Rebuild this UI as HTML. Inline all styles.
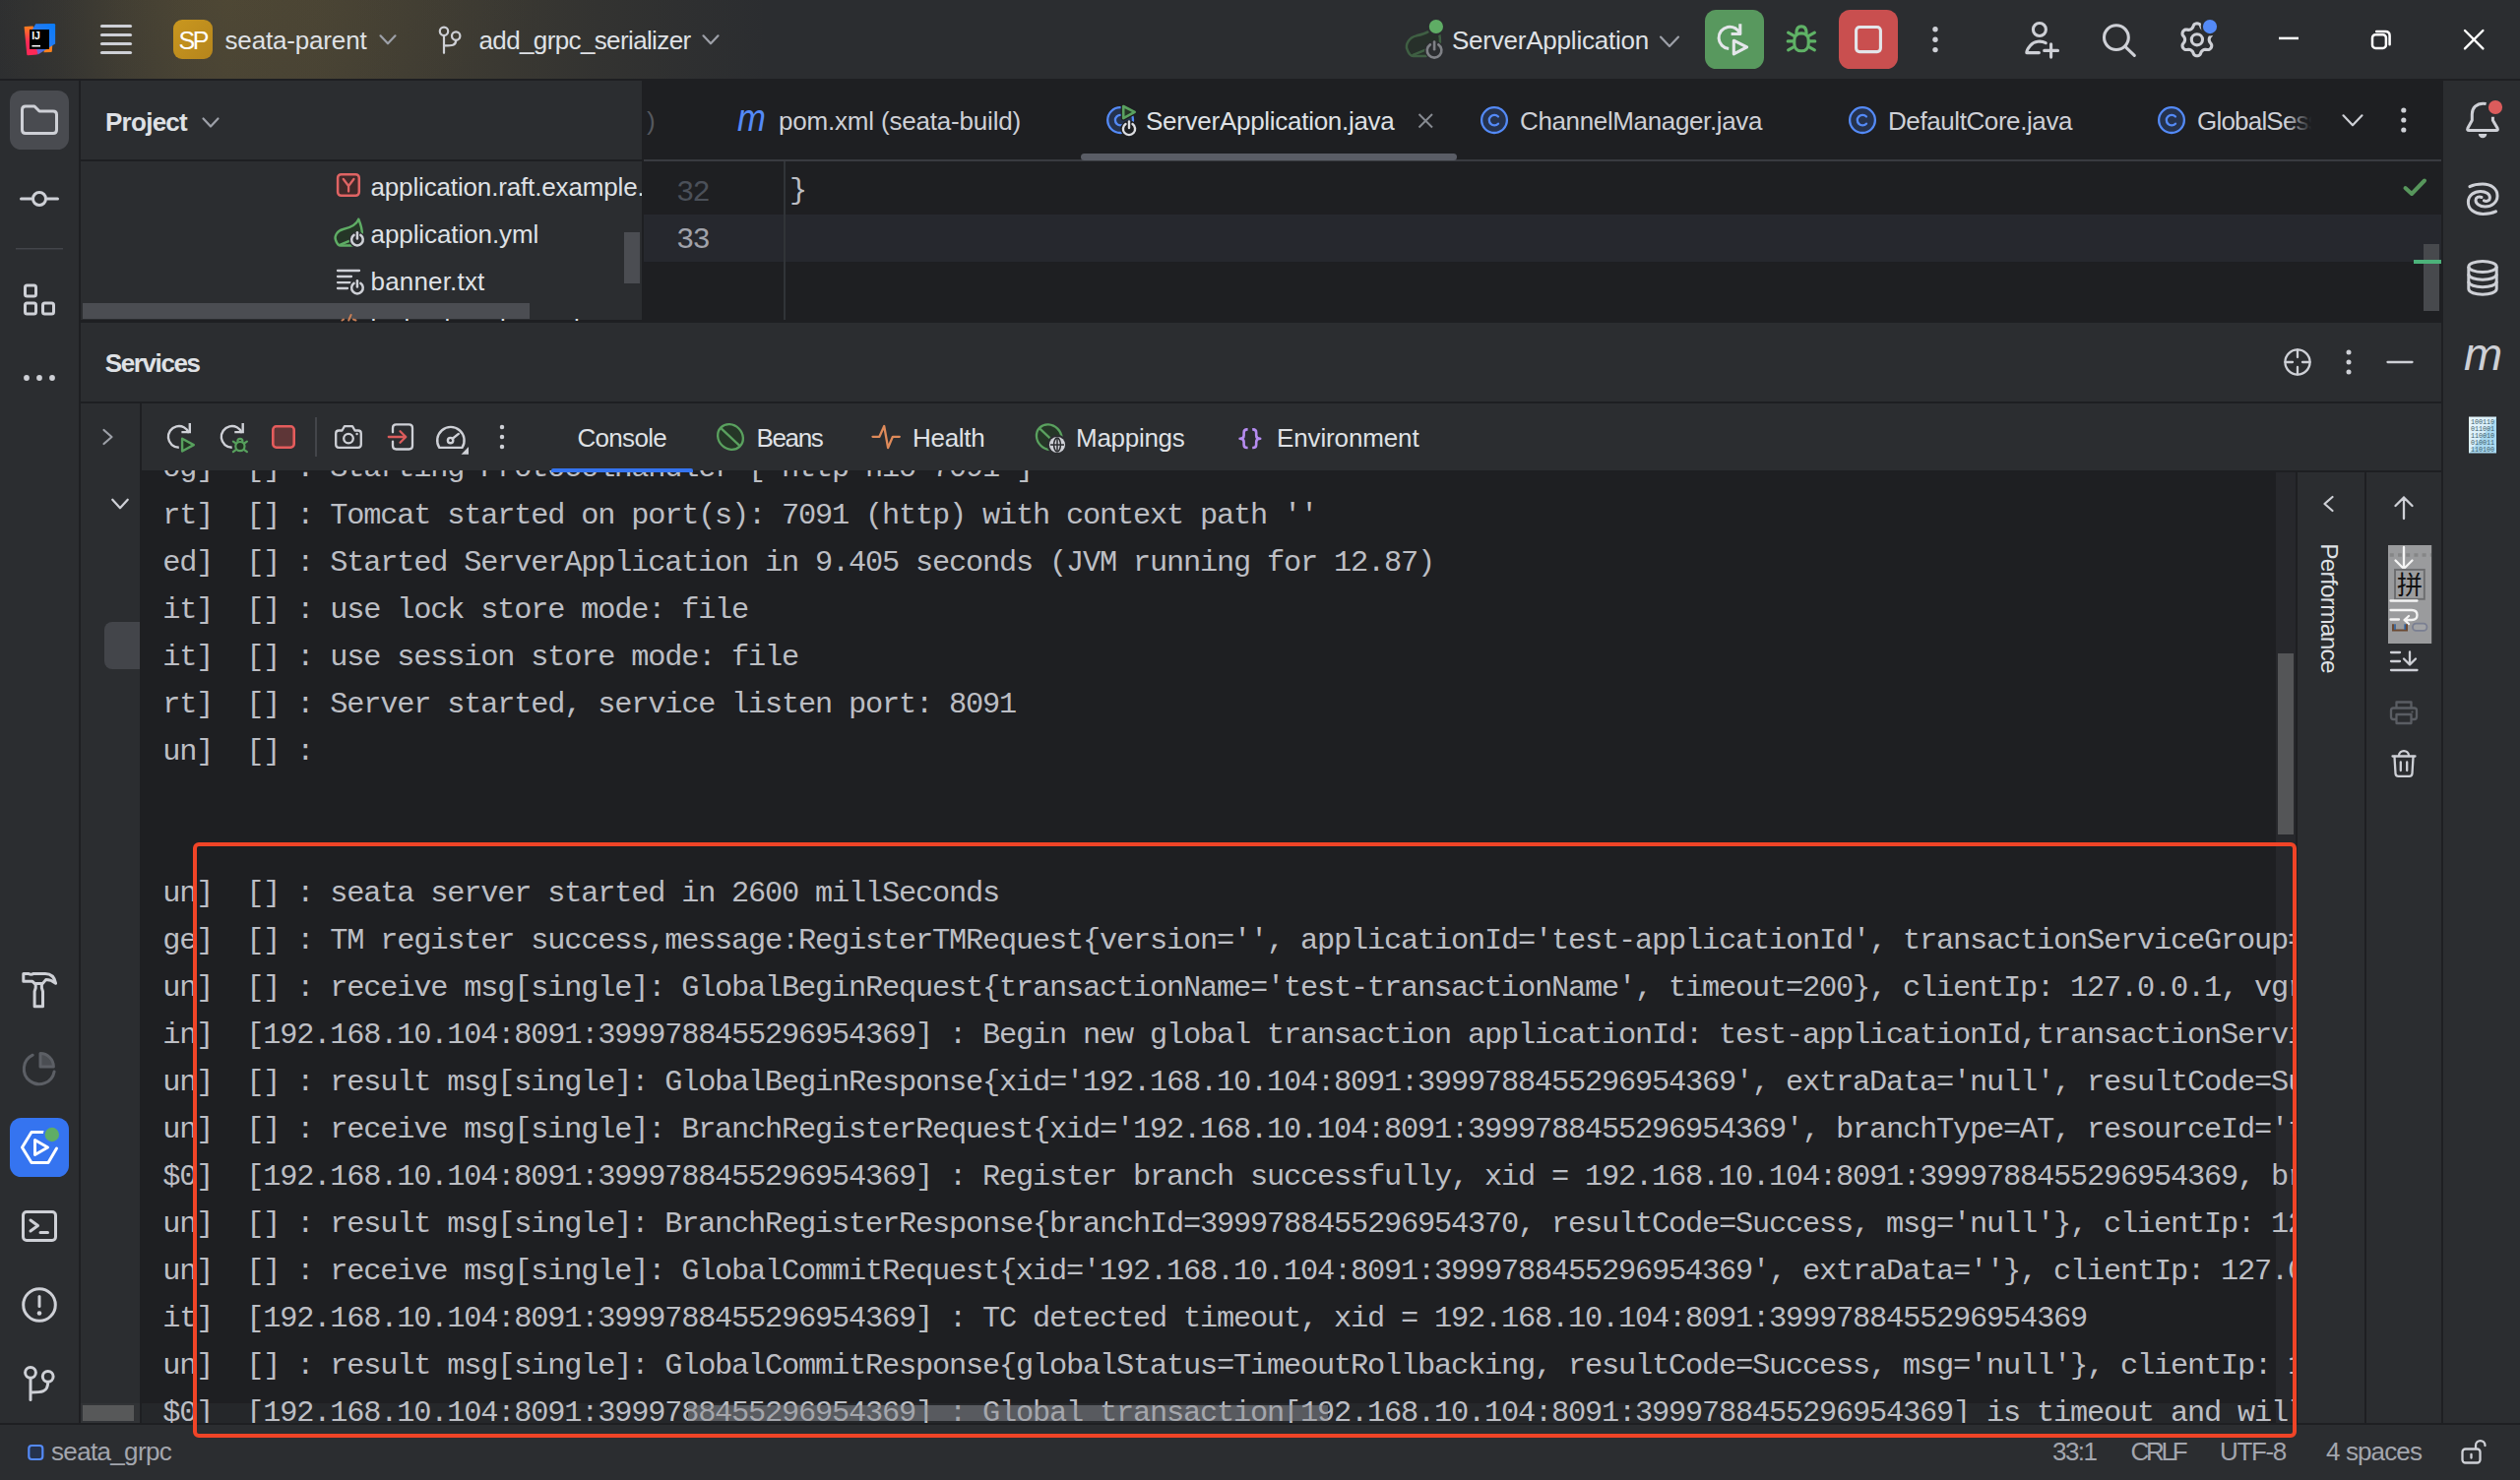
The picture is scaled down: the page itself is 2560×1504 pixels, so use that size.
<!DOCTYPE html>
<html lang="en"><head><meta charset="utf-8"><title>seata-parent – ServerApplication.java</title>
<style>
html,body{margin:0;padding:0;background:#2b2d30;}
body{width:2560px;height:1504px;overflow:hidden;font-family:"Liberation Sans","Noto Sans CJK SC",sans-serif;}
#root{position:relative;width:2560px;height:1504px;overflow:hidden;background:#2b2d30;}
.b{position:absolute;display:block;}
.t{position:absolute;white-space:pre;line-height:40px;height:40px;}
.m{position:absolute;white-space:pre;font-family:"Liberation Mono","DejaVu Sans Mono",monospace;font-size:30.3px;letter-spacing:-1.183px;line-height:48px;height:48px;color:#bcbec4;}
.clip{position:absolute;overflow:hidden;}

</style></head>
<body>
<div id="root">
<div class="b" style="left:0;top:0;width:2560px;height:80px;background:radial-gradient(ellipse 330px 110px at 230px 0px, rgba(150,125,62,0.05), rgba(150,125,62,0) 100%), linear-gradient(90deg, rgba(150,125,62,0.02) 0px, rgba(150,125,62,0.08) 60px, rgba(150,125,62,0.18) 120px, rgba(150,125,62,0.26) 180px, rgba(150,125,62,0.29) 230px, rgba(150,125,62,0.27) 320px, rgba(150,125,62,0.22) 400px, rgba(150,125,62,0.15) 500px, rgba(150,125,62,0.08) 600px, rgba(150,125,62,0.03) 700px, rgba(150,125,62,0) 780px), #2b2d30;"></div>
<div class="b" style="left:0px;top:80px;width:2560px;height:2px;background:#1e1f22;"></div>
<div class="b" style="left:0px;top:82px;width:80px;height:1364px;background:#2b2d30;"></div>
<div class="b" style="left:80px;top:82px;width:2px;height:1364px;background:#1e1f22;"></div>
<div class="b" style="left:2480px;top:82px;width:2px;height:1364px;background:#1e1f22;"></div>
<div class="b" style="left:2482px;top:82px;width:78px;height:1364px;background:#2b2d30;"></div>
<div class="b" style="left:82px;top:82px;width:570px;height:243px;background:#2b2d30;"></div>
<div class="b" style="left:82px;top:162px;width:570px;height:2px;background:#1e1f22;"></div>
<div class="b" style="left:652px;top:82px;width:1828px;height:243px;background:#1e1f22;"></div>
<div class="b" style="left:654px;top:162px;width:1826px;height:2px;background:#393b40;"></div>
<div class="b" style="left:654px;top:218px;width:1826px;height:48px;background:#26282e;"></div>
<div class="b" style="left:796px;top:164px;width:2px;height:161px;background:#313438;"></div>
<div class="b" style="left:82px;top:325px;width:2398px;height:3px;background:#1e1f22;"></div>
<div class="b" style="left:82px;top:328px;width:2398px;height:1118px;background:#2b2d30;"></div>
<div class="b" style="left:82px;top:408px;width:2398px;height:2px;background:#1e1f22;"></div>
<div class="b" style="left:142px;top:410px;width:2px;height:1036px;background:#1e1f22;"></div>
<div class="b" style="left:144px;top:478px;width:2188px;height:968px;background:#1e1f22;"></div>
<div class="b" style="left:2332px;top:478px;width:2px;height:968px;background:#1e1f22;"></div>
<div class="b" style="left:2402px;top:478px;width:2px;height:968px;background:#1e1f22;"></div>
<div class="b" style="left:0px;top:1448px;width:2560px;height:56px;background:#2b2d30;"></div>
<div class="b" style="left:0px;top:1446px;width:2560px;height:2px;background:#1e1f22;"></div>
<span class="t" style="left:228.5px;top:20.5px;font-size:26px;color:#dfe1e5;letter-spacing:-0.164px;">seata-parent</span>
<span class="t" style="left:486.5px;top:20.5px;font-size:26px;color:#dfe1e5;letter-spacing:-0.626px;">add_grpc_serializer</span>
<span class="t" style="left:1475px;top:20.5px;font-size:26px;color:#dfe1e5;letter-spacing:-0.221px;">ServerApplication</span>
<div class="b" style="left:176px;top:20px;width:40px;height:40px;border-radius:9px;background:linear-gradient(135deg,#c9971f,#b5851c);"></div>
<span class="t" style="left:181.5px;top:20.8px;font-size:25px;color:#ffffff;letter-spacing:-2.426px;">SP</span>
<span class="t" style="left:107px;top:103.5px;font-size:26px;font-weight:bold;color:#dfe1e5;letter-spacing:-0.734px;">Project</span>
<div class="clip" style="left:82px;top:164px;width:570px;height:162px;">
<div class="b" style="left:2px;top:144px;width:454px;height:16px;background:#4b4d52;"></div>
<div class="b" style="left:552px;top:72px;width:16px;height:52px;background:#4b4d52;"></div>
<span class="t" style="left:294.5px;top:5.5px;font-size:26px;color:#dfe1e5;letter-spacing:-0.151px;">application.raft.example.yml</span>
<span class="t" style="left:294.5px;top:53.5px;font-size:26px;color:#dfe1e5;letter-spacing:-0.084px;">application.yml</span>
<span class="t" style="left:294.5px;top:101.5px;font-size:26px;color:#dfe1e5;letter-spacing:0.182px;">banner.txt</span>
<span class="t" style="left:294.5px;top:150.0px;font-size:26px;color:#dfe1e5;letter-spacing:-0.263px;">logback-spring.xml</span>
</div>
<span class="t" style="left:657px;top:102.5px;font-size:26px;color:#55585e;letter-spacing:-0.657px;">)</span>
<span class="t" style="left:791px;top:102.5px;font-size:26px;color:#ced0d6;letter-spacing:-0.188px;">pom.xml (seata-build)</span>
<span class="t" style="left:1164px;top:102.5px;font-size:26px;color:#dfe1e5;letter-spacing:-0.281px;">ServerApplication.java</span>
<span class="t" style="left:1544px;top:102.5px;font-size:26px;color:#ced0d6;letter-spacing:-0.365px;">ChannelManager.java</span>
<span class="t" style="left:1918px;top:102.5px;font-size:26px;color:#ced0d6;letter-spacing:-0.415px;">DefaultCore.java</span>
<div class="clip" style="left:2232px;top:100px;width:120px;height:44px;">
<span class="t" style="left:0;top:2.5px;font-size:26px;color:#ced0d6;letter-spacing:-0.8px;">GlobalSession.java</span>
<div class="b" style="left:90px;top:0;width:30px;height:44px;background:linear-gradient(90deg,rgba(30,31,34,0),#1e1f22 88%);"></div>
</div>
<span class="t" style="left:106.7px;top:349.3px;font-size:26px;font-weight:bold;color:#dfe1e5;letter-spacing:-1.372px;">Services</span>
<span class="t" style="left:586.5px;top:425.0px;font-size:26px;color:#dfe1e5;letter-spacing:-0.698px;">Console</span>
<span class="t" style="left:768.5px;top:425.0px;font-size:26px;color:#dfe1e5;letter-spacing:-1.344px;">Beans</span>
<span class="t" style="left:927px;top:425.0px;font-size:26px;color:#dfe1e5;letter-spacing:-0.275px;">Health</span>
<span class="t" style="left:1093px;top:425.0px;font-size:26px;color:#dfe1e5;letter-spacing:-0.278px;">Mappings</span>
<span class="t" style="left:1297px;top:425.0px;font-size:26px;color:#dfe1e5;letter-spacing:-0.132px;">Environment</span>
<span class="t" style="left:52px;top:1454.7px;font-size:26px;color:#a3a6ae;letter-spacing:-0.663px;">seata_grpc</span>
<span class="t" style="left:2085px;top:1454.7px;font-size:26px;color:#a3a6ae;letter-spacing:-1.525px;">33:1</span>
<span class="t" style="left:2164.5px;top:1454.7px;font-size:26px;color:#a3a6ae;letter-spacing:-3.223px;">CRLF</span>
<span class="t" style="left:2255px;top:1454.7px;font-size:26px;color:#a3a6ae;letter-spacing:-1.331px;">UTF-8</span>
<span class="t" style="left:2363px;top:1454.7px;font-size:26px;color:#a3a6ae;letter-spacing:-0.882px;">4 spaces</span>
<span class="m" style="left:687px;top:172.2px;color:#4b5059;letter-spacing:-1.6px;">32</span>
<span class="m" style="left:687px;top:219.6px;color:#a1a3ab;letter-spacing:-1.6px;">33</span>
<span class="m" style="left:802px;top:170.4px;color:#bcbec4;">}</span>
<div class="clip" style="left:144px;top:478px;width:2188px;height:968px;">
<div class="b" style="left:2168px;top:2px;width:20px;height:966px;background:#27282c;"></div>
<div class="b" style="left:0;top:948px;width:2160px;height:20px;background:#25272a;"></div>
<span class="m" style="left:21.19999999999999px;top:-26.1px;">og]  [] : Starting ProtocolHandler [&quot;http-nio-7091&quot;]</span>
<span class="m" style="left:21.19999999999999px;top:21.9px;">rt]  [] : Tomcat started on port(s): 7091 (http) with context path &#x27;&#x27;</span>
<span class="m" style="left:21.19999999999999px;top:69.9px;">ed]  [] : Started ServerApplication in 9.405 seconds (JVM running for 12.87)</span>
<span class="m" style="left:21.19999999999999px;top:117.9px;">it]  [] : use lock store mode: file</span>
<span class="m" style="left:21.19999999999999px;top:165.9px;">it]  [] : use session store mode: file</span>
<span class="m" style="left:21.19999999999999px;top:213.9px;">rt]  [] : Server started, service listen port: 8091</span>
<span class="m" style="left:21.19999999999999px;top:261.9px;">un]  [] : </span>
<span class="m" style="left:21.19999999999999px;top:405.9px;">un]  [] : seata server started in 2600 millSeconds</span>
<span class="m" style="left:21.19999999999999px;top:453.9px;">ge]  [] : TM register success,message:RegisterTMRequest{version=&#x27;&#x27;, applicationId=&#x27;test-applicationId&#x27;, transactionServiceGroup=&#x27;default_tx_group&#x27;}</span>
<span class="m" style="left:21.19999999999999px;top:501.9px;">un]  [] : receive msg[single]: GlobalBeginRequest{transactionName=&#x27;test-transactionName&#x27;, timeout=200}, clientIp: 127.0.0.1, vgroup: default_tx_group</span>
<span class="m" style="left:21.19999999999999px;top:549.9px;">in]  [192.168.10.104:8091:3999788455296954369] : Begin new global transaction applicationId: test-applicationId,transactionServiceGroup: default_tx_group</span>
<span class="m" style="left:21.19999999999999px;top:597.9px;">un]  [] : result msg[single]: GlobalBeginResponse{xid=&#x27;192.168.10.104:8091:3999788455296954369&#x27;, extraData=&#x27;null&#x27;, resultCode=Success, msg=&#x27;null&#x27;}</span>
<span class="m" style="left:21.19999999999999px;top:645.9px;">un]  [] : receive msg[single]: BranchRegisterRequest{xid=&#x27;192.168.10.104:8091:3999788455296954369&#x27;, branchType=AT, resourceId=&#x27;test-resourceId&#x27;}</span>
<span class="m" style="left:21.19999999999999px;top:693.9px;">$0]  [192.168.10.104:8091:3999788455296954369] : Register branch successfully, xid = 192.168.10.104:8091:3999788455296954369, branchId = 3999788455296954370</span>
<span class="m" style="left:21.19999999999999px;top:741.9px;">un]  [] : result msg[single]: BranchRegisterResponse{branchId=3999788455296954370, resultCode=Success, msg=&#x27;null&#x27;}, clientIp: 127.0.0.1, vgroup: default_tx_group</span>
<span class="m" style="left:21.19999999999999px;top:789.9px;">un]  [] : receive msg[single]: GlobalCommitRequest{xid=&#x27;192.168.10.104:8091:3999788455296954369&#x27;, extraData=&#x27;&#x27;}, clientIp: 127.0.0.1, vgroup: default_tx_group</span>
<span class="m" style="left:21.19999999999999px;top:837.9px;">it]  [192.168.10.104:8091:3999788455296954369] : TC detected timeout, xid = 192.168.10.104:8091:3999788455296954369</span>
<span class="m" style="left:21.19999999999999px;top:885.9px;">un]  [] : result msg[single]: GlobalCommitResponse{globalStatus=TimeoutRollbacking, resultCode=Success, msg=&#x27;null&#x27;}, clientIp: 127.0.0.1, vgroup: default_tx_group</span>
<span class="m" style="left:21.19999999999999px;top:933.9px;">$0]  [192.168.10.104:8091:3999788455296954369] : Global transaction[192.168.10.104:8091:3999788455296954369] is timeout and will rollback</span>
</div>
<span class="t" style="left:2366.3px;top:617.8px;width:0;height:0;line-height:0;font-size:24.5px;color:#dfe1e5;"><span style="position:absolute;left:0;top:0;transform:translate(-50%,-50%) rotate(90deg);white-space:pre;line-height:30px;letter-spacing:-0.795px;">Performance</span></span>
<div class="b" style="left:2462px;top:248px;width:16px;height:68px;background:#47494d;"></div>
<div class="b" style="left:2452px;top:264px;width:28px;height:4px;background:#4cb27a;"></div>
<div class="b" style="left:106px;top:632px;width:36px;height:48px;background:#43454a;border-radius:8px 0 0 8px;"></div>
<div class="b" style="left:82px;top:1426px;width:60px;height:20px;background:rgba(255,255,255,0.03);"></div>
<div class="b" style="left:84px;top:1428px;width:52px;height:16px;background:#575859;"></div>
<div class="b" style="left:2314px;top:664px;width:16px;height:184px;background:#545557;"></div>
<div class="b" style="left:699px;top:1428px;width:650px;height:16px;background:rgba(140,142,148,0.5);"></div>
<div class="b" style="left:560px;top:476px;width:144px;height:4px;background:#3574f0;border-radius:2px 2px 0 0;"></div>
<div class="b" style="left:1098px;top:156px;width:382px;height:7px;background:#5a5d66;border-radius:4px;"></div>
<span class="t" style="left:2503px;top:330px;font-size:47px;font-style:italic;color:#ced0d6;line-height:60px;height:60px;letter-spacing:-1px;">m</span>
<span class="t" style="left:748.5px;top:89.5px;font-size:38.5px;font-style:italic;color:#548af7;line-height:60px;height:60px;transform:scaleX(0.9);transform-origin:0 50%;">m</span>
<div class="b" style="left:2312px;top:478px;width:168px;height:2px;background:#1e1f22;"></div>
<div class="b" style="left:196px;top:856px;width:2137px;height:605px;box-sizing:border-box;border:4px solid #f04427;border-radius:6px;"></div>
<svg class="b" style="left:0;top:0;" width="2560" height="1504" viewBox="0 0 2560 1504" fill="none"><defs><linearGradient id="ijg" x1="0" y1="0" x2="0" y2="1"><stop offset="0" stop-color="#fc801d"/><stop offset="0.55" stop-color="#fe2857"/><stop offset="1" stop-color="#fe2857"/></linearGradient><linearGradient id="ijb" x1="1" y1="0" x2="0" y2="1"><stop offset="0" stop-color="#087cfa"/><stop offset="0.6" stop-color="#2b7bf0"/><stop offset="1" stop-color="#a050b0"/></linearGradient></defs><path d="M24.6 27.6 Q24.4 27 25.2 26.9 L33.5 26.6 L42 49.5 L37.6 55.6 L28.3 56.2 Q27.4 56.2 27.3 55.3 Z" fill="url(#ijg)"/><path d="M45 47.5 L53.3 45.5 L52.8 52.2 Q52.7 53 51.9 53 L44.5 53.2 Z" fill="#fc801d"/><path d="M36.3 24.2 L54.8 24 Q56 24 56.1 25.2 L56.1 44.4 L38.5 55.5 L32.5 30.5 Z" fill="url(#ijb)"/><rect x="30" y="30" width="20" height="20" fill="#000"/><text x="32.2" y="39.8" font-family="Liberation Sans, sans-serif" font-weight="bold" font-size="10.5" fill="#fff" letter-spacing="-0.2">IJ</text><rect x="32.4" y="46" width="8.6" height="1.5" fill="#fff"/><line x1="103.5" y1="26.5" x2="132.5" y2="26.5" stroke="#ced0d6" stroke-width="3.2" stroke-linecap="round"/><line x1="103.5" y1="35.5" x2="132.5" y2="35.5" stroke="#ced0d6" stroke-width="3.2" stroke-linecap="round"/><line x1="103.5" y1="44.5" x2="132.5" y2="44.5" stroke="#ced0d6" stroke-width="3.2" stroke-linecap="round"/><line x1="103.5" y1="53.5" x2="132.5" y2="53.5" stroke="#ced0d6" stroke-width="3.2" stroke-linecap="round"/><polyline points="386.5,36.3 394,44.3 401.5,36.3" stroke="#9da0a8" stroke-width="2.2" stroke-linecap="round" stroke-linejoin="round"/><polyline points="714.5,36.3 722,44.3 729.5,36.3" stroke="#9da0a8" stroke-width="2.2" stroke-linecap="round" stroke-linejoin="round"/><polyline points="1687.0,37.55 1696,47.05 1705.0,37.55" stroke="#9da0a8" stroke-width="2.2" stroke-linecap="round" stroke-linejoin="round"/><g stroke="#ced0d6" stroke-width="2.2" stroke-linecap="round"><circle cx="451" cy="31.8" r="4.2"/><circle cx="463.2" cy="36.6" r="4.2"/><path d="M451 36 V53.8"/><path d="M463.2 40.9 C463.2 46.4 459 46.4 451.6 46.4"/></g><g transform="translate(1428.2 22.6) scale(1.25)"><path d="M24.3 0.7 C22 7 16 9.5 8.5 11 C2 12.5 -0.5 18.5 1 22 C2 25 4 27.5 6 27.5 H16 C22 27.5 26 24 27.8 16 C28 11 26.5 6 24.3 0.7 Z" stroke="#3f5f43" stroke-width="2.00" fill="#27302a" stroke-linejoin="round"/><path d="M5.8 26.6 L16 22.4" stroke="#3f5f43" stroke-width="2.00" stroke-linecap="round" fill="none"/></g><circle cx="1457.1" cy="51.3" r="9.9" fill="#2b2d30"/><path d="M1461.29 45.32 A7.3 7.3 0 1 1 1452.91 45.32" stroke="#7f8186" stroke-width="2.6" stroke-linecap="round"/><line x1="1457.1" y1="42.5" x2="1457.1" y2="50.3" stroke="#7f8186" stroke-width="2.6" stroke-linecap="round"/><circle cx="1458.9" cy="27" r="9.2" fill="#2b2d30"/><circle cx="1458.9" cy="27" r="7.1" fill="#5fad65"/><rect x="1732" y="10" width="60" height="60" rx="11.4" fill="#58985e"/><g stroke="#e4e6ea" stroke-width="3.1" stroke-linejoin="round"><path d="M1756.2 49.55 A11.2 11.2 0 1 1 1767.8 34.6" stroke-linecap="butt"/><path d="M1758.6 34.5 H1767.8 V24.2" stroke-linecap="butt"/><path d="M1761.3 41.2 L1774.6 47.9 L1761.3 54.9 Z" fill="#58985e"/></g><g stroke="#5fb266" stroke-width="3.1" stroke-linecap="round"><path d="M1822.8 41 C1822.8 35.5 1825.5 33.9 1830 33.9 C1834.5 33.9 1837.2 35.5 1837.2 41 V44.5 C1837.2 49.5 1834 51.8 1830 51.8 C1826 51.8 1822.8 49.5 1822.8 44.5 Z"/><path d="M1824.9 33.6 C1824.9 29 1827 26.9 1830 26.9 C1833 26.9 1835.1 29 1835.1 33.6"/><path d="M1816.6 33.2 L1822 36.2 M1843.4 33.2 L1838 36.2 M1816.2 41.9 H1821.6 M1843.8 41.9 H1838.4 M1816.6 50.8 L1822 47.8 M1843.4 50.8 L1838 47.8"/></g><rect x="1868" y="10" width="60" height="60" rx="11.4" fill="#c94f4f"/><rect x="1885.6" y="27.5" width="24.8" height="25.1" rx="3.5" stroke="#e3e6ea" stroke-width="3.1"/><circle cx="1966" cy="29.8" r="2.7" fill="#ced0d6"/><circle cx="1966" cy="40.2" r="2.7" fill="#ced0d6"/><circle cx="1966" cy="50.6" r="2.7" fill="#ced0d6"/><g stroke="#ced0d6" stroke-width="3.1" stroke-linecap="round" stroke-linejoin="round"><circle cx="2071.9" cy="30" r="6.5"/><path d="M2078.2 43.7 C2073.5 41.2 2066.5 41.6 2062.6 46.2 C2060.2 49 2058.8 52 2058.8 53.6 H2071.4"/><path d="M2076.7 51.4 H2090.5 M2083.6 44.7 V58.1"/></g><g stroke="#ced0d6" stroke-width="3.1" stroke-linecap="round"><circle cx="2149.9" cy="38.1" r="12.4"/><path d="M2158.9 47.4 L2168.3 56.4"/></g><path d="M2244.20 40.30 L2244.27 39.49 L2244.49 38.64 L2244.87 37.72 L2245.81 36.57 L2246.65 35.29 L2246.78 34.14 L2246.61 33.05 L2246.19 32.05 L2245.54 31.19 L2244.68 30.50 L2243.61 30.03 L2242.08 30.12 L2240.62 30.36 L2239.63 30.23 L2238.79 29.99 L2238.05 29.65 L2237.38 29.18 L2236.76 28.57 L2236.15 27.78 L2235.63 26.39 L2234.94 25.02 L2234.00 24.33 L2232.97 23.93 L2231.90 23.80 L2230.83 23.93 L2229.80 24.33 L2228.86 25.02 L2228.17 26.39 L2227.65 27.78 L2227.04 28.57 L2226.42 29.18 L2225.75 29.65 L2225.01 29.99 L2224.17 30.23 L2223.18 30.36 L2221.72 30.12 L2220.19 30.03 L2219.12 30.50 L2218.26 31.19 L2217.61 32.05 L2217.19 33.05 L2217.02 34.14 L2217.15 35.29 L2217.99 36.57 L2218.93 37.72 L2219.31 38.64 L2219.53 39.49 L2219.60 40.30 L2219.53 41.11 L2219.31 41.96 L2218.93 42.88 L2217.99 44.03 L2217.15 45.31 L2217.02 46.46 L2217.19 47.55 L2217.61 48.55 L2218.26 49.41 L2219.12 50.10 L2220.19 50.57 L2221.72 50.48 L2223.18 50.24 L2224.17 50.37 L2225.01 50.61 L2225.75 50.95 L2226.42 51.42 L2227.04 52.03 L2227.65 52.82 L2228.17 54.21 L2228.86 55.58 L2229.80 56.27 L2230.83 56.67 L2231.90 56.80 L2232.97 56.67 L2234.00 56.27 L2234.94 55.58 L2235.63 54.21 L2236.15 52.82 L2236.76 52.03 L2237.38 51.42 L2238.05 50.95 L2238.79 50.61 L2239.63 50.37 L2240.62 50.24 L2242.08 50.48 L2243.61 50.57 L2244.68 50.10 L2245.54 49.41 L2246.19 48.55 L2246.61 47.55 L2246.78 46.46 L2246.65 45.31 L2245.81 44.03 L2244.87 42.88 L2244.49 41.96 L2244.27 41.11 Z" stroke="#ced0d6" stroke-width="3.1" stroke-linejoin="round"/><circle cx="2231.9" cy="40.3" r="5.6" stroke="#ced0d6" stroke-width="3.1"/><circle cx="2245" cy="27.1" r="9.3" fill="#2b2d30"/><circle cx="2245" cy="27.1" r="7.1" fill="#548af7"/><line x1="2315" y1="38.9" x2="2335" y2="38.9" stroke="#fff" stroke-width="2.5"/><g stroke="#fff" stroke-width="2.5" stroke-linecap="round"><rect x="2410" y="35.2" width="13.9" height="13.7" rx="3.2"/><path d="M2414.2 31.9 H2423.3 Q2427.6 31.9 2427.6 36.2 V45.2"/></g><path d="M2504 31 L2522.4 49.4 M2522.4 31 L2504 49.4" stroke="#fff" stroke-width="2.4" stroke-linecap="round"/><rect x="10" y="92" width="60" height="60" rx="11.5" fill="#494b50"/><path d="M22.5 111.5 Q22.5 108 26 108 H35 L40 113 H54 Q57.5 113 57.5 116.5 V132 Q57.5 135.5 54 135.5 H26 Q22.5 135.5 22.5 132 Z" stroke="#ced0d6" stroke-width="3" stroke-linejoin="round"/><g stroke="#ced0d6" stroke-width="3" stroke-linecap="round"><circle cx="40" cy="202" r="6.5"/><path d="M21.5 202 H32 M48 202 H58.5"/></g><rect x="16" y="252" width="48" height="1.5" fill="#43454a"/><g stroke="#ced0d6" stroke-width="3"><rect x="25.5" y="290" width="11" height="11" rx="2"/><rect x="25.5" y="308" width="11" height="11" rx="2"/><rect x="43.5" y="308" width="11" height="11" rx="2"/></g><circle cx="27" cy="384" r="2.9" fill="#ced0d6"/><circle cx="40" cy="384" r="2.9" fill="#ced0d6"/><circle cx="53" cy="384" r="2.9" fill="#ced0d6"/><g stroke="#ced0d6" stroke-width="3" stroke-linejoin="round" stroke-linecap="round"><path d="M23.8 989.4 H29.2 Q31.5 991 34.2 989.4 H46 C52 989.4 55.6 993.6 56.6 999.2 C53.2 996.6 50 995.6 46.6 995.6 L43.2 999.6 H35.4 L33 997.3 H23.8 Z"/><path d="M36.2 1000 V1004 L35.1 1007.5 V1022.7 H43.5 V1007.5 L42.4 1004 V1000"/></g><g stroke="#5c5f65" stroke-width="3" stroke-linecap="round" stroke-linejoin="round"><path d="M33.2 1072.2 A15.5 15.5 0 1 0 55.1 1088.9"/><path d="M41 1070.6 A13.4 13.4 0 0 1 54.4 1084 H41 Z" fill="#4a4d52"/></g><rect x="10" y="1136" width="60" height="60" rx="11.5" fill="#3574f0"/><g stroke="#fff" stroke-width="3" stroke-linejoin="round" stroke-linecap="round"><path d="M44 1150.5 H32 L22.5 1166 L32 1181.5 H49 L57.5 1167"/><path d="M35.5 1158.5 L48.5 1166 L35.5 1173.5 Z"/></g><circle cx="52.8" cy="1153" r="9" fill="#3574f0"/><circle cx="52.8" cy="1153" r="7.2" fill="#5fad65"/><g stroke="#ced0d6" stroke-width="3" stroke-linecap="round" stroke-linejoin="round"><rect x="23.5" y="1231.5" width="33" height="29" rx="3.5"/><path d="M31 1240 L38.5 1245.5 L31 1251 M41 1252.5 H48.5"/></g><g stroke="#ced0d6" stroke-width="3" stroke-linecap="round"><circle cx="40" cy="1326" r="16.3"/><path d="M40 1317.5 V1327.5"/></g><circle cx="40" cy="1334.5" r="2.3" fill="#ced0d6"/><g stroke="#ced0d6" stroke-width="3" stroke-linecap="round"><circle cx="31" cy="1394.8" r="5.4"/><circle cx="48.7" cy="1398.8" r="5.4"/><path d="M31 1400.5 V1422.5"/><path d="M48.7 1404.5 C48.7 1415 42 1415 31.5 1415"/></g><path d="M2525.6 105.5 C2524.5 105.3 2523.5 105.2 2522.4 105.2 C2516 105.2 2511.3 109.6 2511.3 116 V122.2 L2506.9 130.3 Q2505.9 132.4 2508.2 132.4 H2535.8 Q2538.1 132.4 2537.1 130.3 L2532.4 122.2 V118.8" stroke="#ced0d6" stroke-width="3" stroke-linejoin="round" stroke-linecap="butt"/><path d="M2517.8 136 H2526.3 A4.25 4.25 0 0 1 2517.8 136 Z" fill="#ced0d6"/><circle cx="2535" cy="109" r="7.1" fill="#db5c5c"/><g stroke="#ced0d6" stroke-width="3" stroke-linecap="round"><path d="M2508.9 189.6 C2513 187.6 2518 187 2522 187 C2531 187 2537 192 2537 199 C2537 206 2531 210 2524.5 210 C2519 210 2515 207 2515 203.5 C2515 200.5 2518 199.3 2521 200.5"/><path d="M2508.9 189.6 C2513 187.6 2518 187 2522 187 C2531 187 2537 192 2537 199 C2537 206 2531 210 2524.5 210 C2519 210 2515 207 2515 203.5 C2515 200.5 2518 199.3 2521 200.5" transform="rotate(180 2522.2 202.2)"/></g><g stroke="#ced0d6" stroke-width="3"><ellipse cx="2522" cy="271" rx="14.2" ry="5.6"/><path d="M2507.8 271 V293.5 C2507.8 301 2536.2 301 2536.2 293.5 V271"/><path d="M2507.8 278.5 C2507.8 286 2536.2 286 2536.2 278.5"/><path d="M2507.8 286 C2507.8 293.5 2536.2 293.5 2536.2 286"/></g><defs><linearGradient id="bing" x1="0" y1="0" x2="1" y2="1"><stop offset="0" stop-color="#e8f6fc"/><stop offset="0.5" stop-color="#d6eef9"/><stop offset="0.52" stop-color="#a9d9f0"/><stop offset="1" stop-color="#a9d9f0"/></linearGradient></defs><rect x="2508" y="423.5" width="28" height="37" fill="url(#bing)"/><text x="2510" y="431.2" font-family="Liberation Mono, monospace" font-size="6.6" fill="#3d5866" textLength="24" lengthAdjust="spacingAndGlyphs">100110</text><text x="2510" y="438.1" font-family="Liberation Mono, monospace" font-size="6.6" fill="#3d5866" textLength="24" lengthAdjust="spacingAndGlyphs">011001</text><text x="2510" y="445.0" font-family="Liberation Mono, monospace" font-size="6.6" fill="#3d5866" textLength="24" lengthAdjust="spacingAndGlyphs">110010</text><text x="2510" y="451.9" font-family="Liberation Mono, monospace" font-size="6.6" fill="#3d5866" textLength="24" lengthAdjust="spacingAndGlyphs">010011</text><text x="2510" y="458.8" font-family="Liberation Mono, monospace" font-size="6.6" fill="#3d5866" textLength="24" lengthAdjust="spacingAndGlyphs">110100</text><polyline points="206.5,120.5 214,128.5 221.5,120.5" stroke="#9da0a8" stroke-width="2.2" stroke-linecap="round" stroke-linejoin="round"/><rect x="343.1" y="177.2" width="21.7" height="21.6" rx="3.5" stroke="#e06464" stroke-width="2.5" fill="#402929"/><path d="M348.8 182 L354.1 189 L359.4 182 M354.1 189 V194.6" stroke="#e06464" stroke-width="2.3" stroke-linecap="round" stroke-linejoin="round"/><g transform="translate(340 222) scale(1.0)"><path d="M24.3 0.7 C22 7 16 9.5 8.5 11 C2 12.5 -0.5 18.5 1 22 C2 25 4 27.5 6 27.5 H16 C22 27.5 26 24 27.8 16 C28 11 26.5 6 24.3 0.7 Z" stroke="#5fad65" stroke-width="2.40" fill="#253627" stroke-linejoin="round"/><path d="M5.8 26.6 L16 22.4" stroke="#5fad65" stroke-width="2.40" stroke-linecap="round" fill="none"/></g><circle cx="362.95" cy="243.6" r="8.4" fill="#2b2d30"/><path d="M366.28 238.85 A5.8 5.8 0 1 1 359.62 238.85" stroke="#ced0d6" stroke-width="2.5" stroke-linecap="round"/><line x1="362.95" y1="236.29999999999998" x2="362.95" y2="242.6" stroke="#ced0d6" stroke-width="2.5" stroke-linecap="round"/><path d="M347.5 325.5 L349 324.6 M354.2 325.5 L356.6 320 M359 324.6 L361.5 325.5" stroke="#c77d55" stroke-width="2" stroke-linecap="round"/><path d="M343 275 H365 M343 281 H357 M343 287.1 H355.5 M343 293 H353" stroke="#ced0d6" stroke-width="2.3" stroke-linecap="round"/><circle cx="362.95" cy="292.6" r="8.4" fill="#2b2d30"/><path d="M366.28 287.85 A5.8 5.8 0 1 1 359.62 287.85" stroke="#ced0d6" stroke-width="2.5" stroke-linecap="round"/><line x1="362.95" y1="285.3" x2="362.95" y2="291.6" stroke="#ced0d6" stroke-width="2.5" stroke-linecap="round"/><circle cx="1138.1" cy="122.1" r="12.9" stroke="#548af7" stroke-width="2.3" fill="#25324d"/><path d="M1142.1 118.5 A5.3 5.3 0 1 0 1142.1 125.69999999999999" stroke="#548af7" stroke-width="2.3" stroke-linecap="round"/><path d="M1141.2 108 L1152.7 113.9 L1141.2 120.1 Z" fill="#1e1f22" stroke="#1e1f22" stroke-width="5.2" stroke-linejoin="round"/><path d="M1141.2 108 L1152.7 113.9 L1141.2 120.1 Z" fill="#253627" stroke="#5aa15f" stroke-width="2.6" stroke-linejoin="round"/><circle cx="1147" cy="131" r="8.7" fill="#1e1f22"/><path d="M1150.50 126.00 A6.1 6.1 0 1 1 1143.50 126.00" stroke="#dcdde1" stroke-width="2.4" stroke-linecap="round"/><line x1="1147" y1="123.4" x2="1147" y2="130" stroke="#dcdde1" stroke-width="2.4" stroke-linecap="round"/><circle cx="1518" cy="122.1" r="12.9" stroke="#548af7" stroke-width="2.3" fill="#25324d"/><path d="M1522.0 118.5 A5.3 5.3 0 1 0 1522.0 125.69999999999999" stroke="#548af7" stroke-width="2.3" stroke-linecap="round"/><circle cx="1892" cy="122.1" r="12.9" stroke="#548af7" stroke-width="2.3" fill="#25324d"/><path d="M1896.0 118.5 A5.3 5.3 0 1 0 1896.0 125.69999999999999" stroke="#548af7" stroke-width="2.3" stroke-linecap="round"/><circle cx="2206" cy="122.1" r="12.9" stroke="#548af7" stroke-width="2.3" fill="#25324d"/><path d="M2210.0 118.5 A5.3 5.3 0 1 0 2210.0 125.69999999999999" stroke="#548af7" stroke-width="2.3" stroke-linecap="round"/><path d="M1441.5 116 L1455 129.5 M1455 116 L1441.5 129.5" stroke="#868a91" stroke-width="2"/><polyline points="2380.5,117.3 2390,127.3 2399.5,117.3" stroke="#ced0d6" stroke-width="2.2" stroke-linecap="round" stroke-linejoin="round"/><circle cx="2441.8" cy="112" r="2.6" fill="#ced0d6"/><circle cx="2441.8" cy="122" r="2.6" fill="#ced0d6"/><circle cx="2441.8" cy="132" r="2.6" fill="#ced0d6"/><polyline points="2443.5,191 2450,197 2463,183.5" stroke="#57965c" stroke-width="4" stroke-linecap="round" stroke-linejoin="round"/><g stroke="#ced0d6" stroke-width="2.3" stroke-linecap="round"><circle cx="2334" cy="368" r="12.6"/><path d="M2334 355.5 V363 M2334 373 V380.5 M2321.5 368 H2329 M2339 368 H2346.5"/></g><circle cx="2386" cy="358" r="2.5" fill="#ced0d6"/><circle cx="2386" cy="368" r="2.5" fill="#ced0d6"/><circle cx="2386" cy="378" r="2.5" fill="#ced0d6"/><line x1="2425.5" y1="368" x2="2450.5" y2="368" stroke="#ced0d6" stroke-width="2.3" stroke-linecap="round"/><polyline points="105.5,437.0 113.5,444 105.5,451.0" stroke="#9da0a8" stroke-width="2.2" stroke-linecap="round" stroke-linejoin="round"/><polyline points="114.25,507.7 122,516.3 129.75,507.7" stroke="#ced0d6" stroke-width="2.2" stroke-linecap="round" stroke-linejoin="round"/><g stroke="#ced0d6" stroke-width="2.4" stroke-linejoin="miter"><path d="M181.8 454.79999999999995 A10.9 10.9 0 1 1 192.00 440.00"/><path d="M184.40 439.10 H192.80 V430.10"/></g><path d="M185.1 445.8 L196.8 452.1 L185.1 458.5 Z" fill="#213222" stroke="#57a05d" stroke-width="2.4" stroke-linejoin="round"/><g stroke="#ced0d6" stroke-width="2.4" stroke-linejoin="miter"><path d="M235.7 454.79999999999995 A10.9 10.9 0 1 1 245.90 440.00"/><path d="M238.30 439.10 H246.70 V430.10"/></g><g stroke="#57a05d" stroke-width="2.2" stroke-linecap="round"><path d="M236.9 448.7 L240.4 451 M250.9 448.7 L247.4 451 M236.9 459.2 L240.4 456.6 M250.9 459.2 L247.4 456.6"/><path d="M241.4 448.4 A2.5 2.5 0 0 1 246.4 448.4"/><circle cx="243.9" cy="453.6" r="4.6" fill="#213222"/></g><rect x="277.3" y="433.3" width="21.4" height="21.4" rx="3.4" stroke="#e55c5c" stroke-width="2.6" fill="#5e3637"/><rect x="320" y="424" width="2" height="40" fill="#43454a"/><g stroke="#ced0d6" stroke-width="2.3" stroke-linejoin="round"><path d="M341.2 440.5 Q341.2 437.5 344.2 437.5 H347.5 L350 433.2 H358 L360.5 437.5 H363.8 Q366.8 437.5 366.8 440.5 V451.8 Q366.8 454.8 363.8 454.8 H344.2 Q341.2 454.8 341.2 451.8 Z"/><circle cx="354" cy="445.6" r="4.8"/></g><circle cx="362.6" cy="441" r="1.2" fill="#ced0d6"/><path d="M399 439.3 V434.9 Q399 431.4 402.5 431.4 H415.5 Q419 431.4 419 434.9 V453 Q419 456.5 415.5 456.5 H402.5 Q399 456.5 399 453 V448.6" stroke="#ced0d6" stroke-width="2.3" stroke-linecap="round"/><path d="M394.8 444 H412 M406.5 438.2 L412.3 444 L406.5 449.8" stroke="#db5c5c" stroke-width="2.3" stroke-linecap="round" stroke-linejoin="round"/><g stroke="#ced0d6" stroke-width="2.4" stroke-linecap="round" stroke-linejoin="round"><path d="M446.3 454.9 A13.7 13.7 0 1 1 469.5 454.9 Z"/><circle cx="457.6" cy="447.6" r="2.7"/><path d="M459.7 445.7 L465.8 440.9"/></g><path d="M476 454.1 V461.7 H468.5 Z" fill="#ced0d6"/><circle cx="510" cy="434" r="2.25" fill="#ced0d6"/><circle cx="510" cy="444" r="2.25" fill="#ced0d6"/><circle cx="510" cy="454" r="2.25" fill="#ced0d6"/><g stroke="#5aa15f" stroke-width="2.3"><ellipse cx="742" cy="444" rx="13.6" ry="12.1" transform="rotate(45 742 444)" fill="#253627"/><path d="M732.6 435.4 L751.6 453.2"/></g><polyline points="886.5,443.8 893.4,443.8 898.2,433 902.1,455 906.9,443.8 913.8,443.8" stroke="#de8a5a" stroke-width="2.3" stroke-linecap="round" stroke-linejoin="round"/><g stroke="#5aa15f" stroke-width="2.3"><ellipse cx="1065.8" cy="444.2" rx="13.6" ry="12.1" transform="rotate(45 1065.8 444.2)" fill="#253627"/><path d="M1056.4 435.6 L1067 445.6"/></g><circle cx="1074" cy="452" r="10.3" fill="#2b2d30"/><circle cx="1074" cy="452" r="8.1" fill="#ced0d6"/><g stroke="#2b2d30" stroke-width="1.5" fill="none"><ellipse cx="1074" cy="452" rx="3.4" ry="6.9"/><path d="M1067 452 H1081 M1074 445 V459"/></g><g stroke="#b68cf0" stroke-width="2.6" stroke-linecap="butt" stroke-linejoin="round"><path d="M1267.6 436.4 H1266.9 Q1263.6 436.4 1263.6 439.7 V442.4 Q1263.6 445.7 1259.6 445.7 Q1263.6 445.7 1263.6 449 V451.7 Q1263.6 455 1266.9 455 H1267.6"/><path d="M1272.2 436.4 H1272.9 Q1276.2 436.4 1276.2 439.7 V442.4 Q1276.2 445.7 1280.2 445.7 Q1276.2 445.7 1276.2 449 V451.7 Q1276.2 455 1272.9 455 H1272.2"/></g><polyline points="2369.5,505.0 2361.5,512 2369.5,519.0" stroke="#ced0d6" stroke-width="2.2" stroke-linecap="round" stroke-linejoin="round"/><path d="M2442 527 V505.5 M2433.5 514 L2442 505.5 L2450.5 514" stroke="#ced0d6" stroke-width="2.3" stroke-linecap="round" stroke-linejoin="round"/><path d="M2442 557 V578 M2433.5 569.5 L2442 578 L2450.5 569.5" stroke="#ced0d6" stroke-width="2.3" stroke-linecap="round" stroke-linejoin="round"/><path d="M2428.5 610.5 H2455.5 M2428.5 620 H2450 Q2455.5 620 2455.5 625 Q2455.5 630 2450 630 H2443 M2447 626 L2442.5 630 L2447 634 M2428.5 629.5 H2437" stroke="#ced0d6" stroke-width="2.3" stroke-linecap="round" stroke-linejoin="round"/><rect x="2426" y="554" width="44.2" height="100" fill="#9a9b9d"/><path d="M2427.8 564 H2470" stroke="#858687" stroke-width="3.6" stroke-dasharray="4 4.2"/><path d="M2442 556 V578 M2433.5 569.5 L2442 578 L2450.5 569.5" stroke="#f4f4f4" stroke-width="2.3" stroke-linecap="round" stroke-linejoin="round"/><rect x="2433" y="578.9" width="29.8" height="29.9" fill="#9c9d9f" stroke="#6c6d6f" stroke-width="1.9"/><text x="2435" y="604" font-family="Noto Sans CJK SC, WenQuanYi Zen Hei, sans-serif" font-size="26" fill="#111">拼</text><path d="M2428.5 610.5 H2455.5 M2428.5 620 H2450 Q2455.5 620 2455.5 625 Q2455.5 630 2450 630 H2443 M2447 626 L2442.5 630 L2447 634 M2428.5 629.5 H2437" stroke="#f4f4f4" stroke-width="2.3" stroke-linecap="round" stroke-linejoin="round"/><path d="M2431 634.2 V640.6 H2445 V634.2" stroke="#6b4a34" stroke-width="2" fill="none"/><path d="M2433 634.2 V640 M2443.2 634.2 V640" stroke="#2f5f9a" stroke-width="1.6"/><rect x="2451" y="633.6" width="14.4" height="7.2" rx="3.4" stroke="#7a7f92" stroke-width="1.8" fill="#a3a4a6"/><path d="M2429 663 H2438 M2429 672 H2438 M2429 681 H2455.5 M2448 662.5 V675.5 M2442 669.5 L2448 675.5 L2454 669.5" stroke="#ced0d6" stroke-width="2.3" stroke-linecap="round" stroke-linejoin="round"/><g stroke="#5a5d63" stroke-width="2.3" stroke-linejoin="round"><path d="M2434.5 719.5 V713.5 H2449.5 V719.5"/><path d="M2434.5 731 H2431.5 Q2429 731 2429 728.5 V722 Q2429 719.5 2431.5 719.5 H2452.5 Q2455 719.5 2455 722 V728.5 Q2455 731 2452.5 731 H2449.5"/><rect x="2434.5" y="726" width="15" height="9"/></g><circle cx="2450.5" cy="723.5" r="1.1" fill="#5a5d63"/><g stroke="#ced0d6" stroke-width="2.3" stroke-linecap="round" stroke-linejoin="round"><path d="M2430.5 768.5 H2453.5"/><path d="M2437 768 C2437 761.5 2447 761.5 2447 768"/><path d="M2432.5 769 L2433.5 786 Q2433.7 788.8 2436.5 788.8 H2447.5 Q2450.3 788.8 2450.5 786 L2451.5 769"/><path d="M2438.8 774.5 V783 M2445.2 774.5 V783"/></g><rect x="29.3" y="1469" width="14" height="14" rx="3" stroke="#548af7" stroke-width="2.2" fill="#25324d"/><g stroke="#ced0d6" stroke-width="2.3" stroke-linecap="round"><rect x="2501.5" y="1472.5" width="18" height="14" rx="3"/><path d="M2515 1472 V1469 C2515 1462.5 2524.5 1462.5 2524.5 1469"/><path d="M2510.5 1478 V1481.5"/></g></svg>
</div>
</body></html>
